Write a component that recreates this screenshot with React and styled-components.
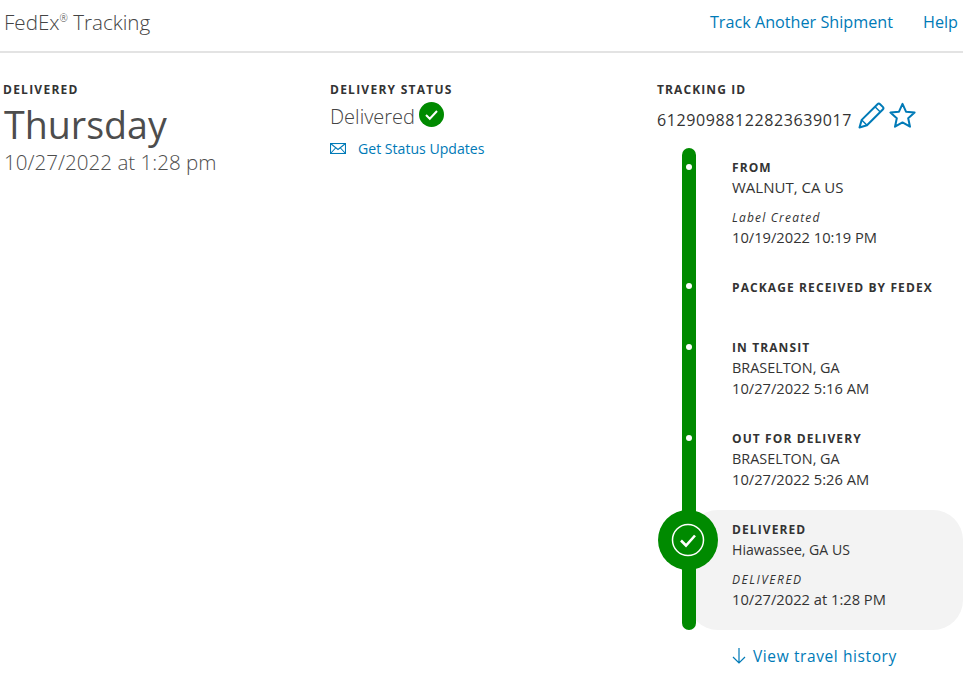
import React from 'react';
import styled, { createGlobalStyle } from 'styled-components';

const GlobalStyle = createGlobalStyle`
  html, body { margin: 0; padding: 0; background: #fff; overflow: hidden; }
  body { font-family: "Open Sans", "Noto Sans", sans-serif; color: #333; }
  * { box-sizing: border-box; }
`;

const Page = styled.div`
  width: 963px;
  height: 676px;
  overflow: hidden;
`;

const Header = styled.header`
  height: 53px;
  padding: 0 5px 7px 4px;
  border-bottom: 2px solid #e3e3e3;
  display: flex;
  align-items: center;
  justify-content: space-between;
`;

const Brand = styled.div`
  font-size: 20.6px;
  font-weight: 300;
  color: #444;
  sup { font-size: 10px; vertical-align: 8px; line-height: 0; }
`;

const Nav = styled.nav`
  display: flex;
  gap: 30px;
`;

const NavLink = styled.a`
  font-size: 16.2px;
  color: #007ab7;
`;

const Columns = styled.main`
  display: grid;
  grid-template-columns: 327px 327px 1fr;
  padding: 30px 0 0 3px;
`;

const Label = styled.div`
  font-size: 12px;
  font-weight: 700;
  letter-spacing: ${p => p.$wide ? 1.25 : 1.1}px;
  line-height: 14px;
  color: #333;
  text-transform: uppercase;
`;

const Day = styled.div`
  font-size: 37.6px;
  line-height: 48px;
  font-weight: 400;
  color: #4d4d4d;
  margin: 4px 0 0 1px;
`;

const DateLine = styled.div`
  font-size: 20.6px;
  line-height: 26px;
  font-weight: 300;
  color: #4d4d4d;
  margin: 0 0 0 1px;
`;

const StatusRow = styled.div`
  display: flex;
  align-items: center;
  gap: 4px;
  font-size: 20px;
  font-weight: 300;
  line-height: 28px;
  color: #444;
  margin-top: 6px;
  svg { margin-top: -6px; }
`;

const UpdatesLink = styled.a`
  display: flex;
  align-items: center;
  gap: 12px;
  margin-top: 8px;
  font-size: 14.1px;
  color: #007ab7;
`;

const IdRow = styled.div`
  display: flex;
  align-items: center;
  height: 28px;
  margin-top: 9px;
  font-size: 16px;
  letter-spacing: .6px;
  gap: 6px;
  svg { margin-top: -10px; flex: none; }
  svg + svg { margin-left: -2px; }
`;

const Timeline = styled.div`
  position: relative;
  width: 305px;
  margin-top: 14px;
  margin-left: 1px;
`;

const Track = styled.div`
  position: absolute;
  left: 24px;
  top: 0;
  width: 14px;
  height: 482px;
  background: #008a00;
  border-radius: 7px;
  z-index: 2;
`;

const Step = styled.div`
  position: relative;
  height: ${p => p.$h}px;
  padding-left: 74px;
  padding-top: ${p => p.$top || 0}px;
  font-size: 14.7px;
  line-height: 21px;
  color: #333;
`;

const Dot = styled.i`
  position: absolute;
  left: 28px;
  top: ${p => p.$top}px;
  width: 6px;
  height: 6px;
  border-radius: 50%;
  background: #fff;
  z-index: 3;
`;

const StepTitle = styled(Label)`
  line-height: 20px;
`;

const Place = styled.div`
  font-size: ${p => p.$size || 14.4}px;
  margin-top: -1px;
`;

const Note = styled.div`
  font-size: 12px;
  font-style: italic;
  letter-spacing: ${p => p.$upper ? 1.5 : 1.2}px;
  line-height: 16px;
  margin-top: 12px;
  margin-bottom: 1px;
  text-transform: ${p => p.$upper ? 'uppercase' : 'none'};
`;

const DeliveredStep = styled(Step)`
  background: #f3f3f3;
  border-radius: 30px;
  margin-left: 30px;
  padding-left: 44px;
  padding-top: 10px;
`;

const BigBadge = styled.div`
  position: absolute;
  left: -30px;
  top: 0;
  width: 60px;
  height: 60px;
  border-radius: 50%;
  background: #008a00;
  display: flex;
  align-items: center;
  justify-content: center;
  z-index: 3;
`;

const HistoryLink = styled.a`
  display: flex;
  align-items: center;
  gap: 7px;
  margin: 15px 0 0 75px;
  font-size: 15.5px;
  letter-spacing: .6px;
  color: #007ab7;
`;

const Check = () => (
  <svg width="25" height="25" viewBox="0 0 25 25">
    <circle cx="12.5" cy="12.5" r="12.5" fill="#008a00" />
    <path d="M7 13l3.8 3.8L18 9" fill="none" stroke="#fff" strokeWidth="2" />
  </svg>
);

const Mail = () => (
  <svg width="16" height="11" viewBox="0 0 16 11" fill="none" stroke="#007ab7" strokeWidth="1.1">
    <rect x=".5" y=".5" width="15" height="10" />
    <path d="M.5.5L8 6.5 15.5.5M.5 10.5l5.5-6M15.5 10.5l-5.5-6" />
  </svg>
);

const Pencil = () => (
  <svg width="27" height="27" viewBox="0 0 27 27" fill="none" stroke="#007ab7" strokeWidth="2" strokeLinejoin="round">
    <path d="M1.5 25.5l2.2-7.6L19.5 2.2c.8-.8 1.8-.8 2.6 0l2.7 2.7c.8.8.8 1.8 0 2.6L9 23.3z" />
    <path d="M3.7 17.9l5.3 5.4M17 4.7l5.3 5.3" strokeWidth="1.4" />
  </svg>
);

const Star = () => (
  <svg width="27" height="27" viewBox="0 0 27 27" fill="none" stroke="#007ab7" strokeWidth="2" strokeLinejoin="round">
    <path d="M13.5 1.8l3.5 7.9 8.6.9-6.4 5.7 1.8 8.4-7.5-4.3-7.5 4.3 1.8-8.4-6.4-5.7 8.6-.9z" />
  </svg>
);

const Arrow = () => (
  <svg width="14" height="16" viewBox="0 0 14 16" fill="none" stroke="#007ab7" strokeWidth="1.2">
    <path d="M7 0v15M1 9l6 6 6-6" />
  </svg>
);

export default function App() {
  return (
    <Page>
      <GlobalStyle />
      <Header>
        <Brand>FedEx<sup>®</sup> Tracking</Brand>
        <Nav>
          <NavLink>Track Another Shipment</NavLink>
          <NavLink>Help</NavLink>
        </Nav>
      </Header>
      <Columns>
        <section>
          <Label $wide>Delivered</Label>
          <Day>Thursday</Day>
          <DateLine>10/27/2022 at 1:28 pm</DateLine>
        </section>
        <section>
          <Label $wide>Delivery status</Label>
          <StatusRow>Delivered <Check /></StatusRow>
          <UpdatesLink><Mail />Get Status Updates</UpdatesLink>
        </section>
        <section>
          <Label>Tracking ID</Label>
          <IdRow>61290988122823639017<Pencil /><Star /></IdRow>
          <Timeline>
            <Track />
            <Step $h={130} $top={10}>
              <Dot $top={16} />
              <StepTitle>From</StepTitle>
              <Place $size={15}>WALNUT, CA US</Place>
              <Note>Label Created</Note>
              10/19/2022 10:19 PM
            </Step>
            <Step $h={60}>
              <Dot $top={5} />
              <StepTitle>Package received by FedEx</StepTitle>
            </Step>
            <Step $h={91}>
              <Dot $top={6} />
              <StepTitle>In transit</StepTitle>
              <Place>BRASELTON, GA</Place>
              10/27/2022 5:16 AM
            </Step>
            <Step $h={81}>
              <Dot $top={6} />
              <StepTitle>Out for delivery</StepTitle>
              <Place>BRASELTON, GA</Place>
              10/27/2022 5:26 AM
            </Step>
            <DeliveredStep $h={120}>
              <BigBadge>
                <svg width="34" height="34" viewBox="0 0 34 34" fill="none" stroke="#fff">
                  <circle cx="17" cy="17" r="15.5" strokeWidth="1.5" />
                  <path d="M10 17.5l5 5 9-10" strokeWidth="2.6" />
                </svg>
              </BigBadge>
              <StepTitle>Delivered</StepTitle>
              <Place $size={14.1}>Hiawassee, GA US</Place>
              <Note $upper>Delivered</Note>
              10/27/2022 at 1:28 PM
            </DeliveredStep>
          </Timeline>
          <HistoryLink><Arrow />View travel history</HistoryLink>
        </section>
      </Columns>
    </Page>
  );
}
